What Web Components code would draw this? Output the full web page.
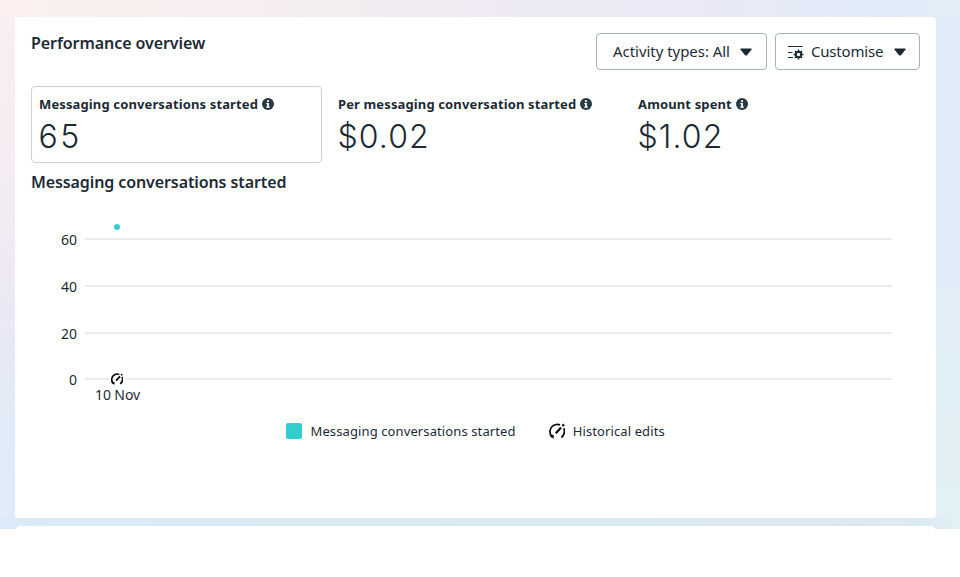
<!DOCTYPE html>
<html lang="en">
<head>
<meta charset="utf-8">
<title>Performance overview</title>
<style>
  body {
    margin: 0;
    height: 577px;
    overflow: hidden;
    background: #fff;
    color: #1c2b33;
    font-family: "Noto Sans", "Open Sans", sans-serif;
  }
</style>
</head>
<body>
<performance-page>
  <performance-card>
    <drop-button slot="actions" label="Activity types: All"></drop-button>
    <drop-button slot="actions" label="Customise" icon="settings"></drop-button>
    <metric-tile slot="metrics" label="Messaging conversations started" value="65" selected></metric-tile>
    <metric-tile slot="metrics" label="Per messaging conversation started" value="$0.02"></metric-tile>
    <metric-tile slot="metrics" label="Amount spent" value="$1.02"></metric-tile>
    <trend-chart></trend-chart>
    <chart-legend></chart-legend>
  </performance-card>
</performance-page>

<script>
class PerformancePage extends HTMLElement {
  connectedCallback() {
    this.attachShadow({ mode: "open" }).innerHTML = `
      <style>
        :host {
          display: block;
          box-sizing: border-box;
          height: 529px;
          padding: 17px 24px 0 15px;
          overflow: hidden;
          background:
            linear-gradient(90deg, #dbe9f8 0, #d9e9f2 30%, #dce8f2 93%, #dcebf5 97%, #e3f2f2 100%) 0 518px / 100% 11px no-repeat,
            linear-gradient(#e0ebf8 0, #e0edf8 50%, #e2f1f4 100%) 100% 17px / 24px 501px no-repeat,
            linear-gradient(#f9eff0 0, #f4ecf2 30%, #ebe8f5 58%, #e1ebf9 82%, #dfebf9 100%) 0 17px / 15px 501px no-repeat,
            linear-gradient(90deg, #fbf0ef 0, #f6eeef 25%, #efeaf3 50%, #e9e9f6 75%, #e1ebf8 92%, #e3eef8 100%);
        }
        .next {
          height: 8px;
          margin: 8px 1px 0;
          background: #fff;
          border-radius: 4px 4px 0 0;
        }
      </style>
      <slot></slot>
      <div class="next"></div>
    `;
  }
}

class PerformanceCard extends HTMLElement {
  connectedCallback() {
    this.attachShadow({ mode: "open" }).innerHTML = `
      <style>
        :host {
          display: block;
          box-sizing: border-box;
          height: 501px;
          padding: 16px;
          background: #fff;
          border-radius: 4px;
        }
        header {
          display: flex;
          justify-content: space-between;
          height: 53px;
        }
        h2, h3 {
          margin: 0;
          font-size: 16px;
          line-height: 22px;
          font-weight: 600;
        }
        h2 { line-height: 20px; letter-spacing: -0.07px; }
        h3 { margin: 8px 0 0; letter-spacing: -0.1px; }
        .actions {
          display: flex;
          align-items: flex-start;
          gap: 8px;
        }
        .metrics {
          display: grid;
          grid-template-columns: 291px 292px 1fr;
          column-gap: 8px;
        }
      </style>
      <header>
        <h2>Performance overview</h2>
        <div class="actions"><slot name="actions"></slot></div>
      </header>
      <div class="metrics"><slot name="metrics"></slot></div>
      <h3>Messaging conversations started</h3>
      <slot></slot>
    `;
  }
}

class DropButton extends HTMLElement {
  connectedCallback() {
    const settings = this.getAttribute("icon") === "settings";
    this.attachShadow({ mode: "open" }).innerHTML = `
      <style>
        :host { display: block; }
        button {
          display: flex;
          align-items: center;
          box-sizing: border-box;
          height: 37px;
          width: ${settings ? 145 : 171}px;
          padding: 0 0 0 ${settings ? 12 : 16}px;
          background: #fff;
          border: 1px solid #a5b3be;
          border-radius: 4px;
          font: 15px "Noto Sans", sans-serif;
          color: inherit;
          white-space: nowrap;
        }
        .icon { margin-right: 7px; }
        .caret { margin-left: ${settings ? 11 : 10}px; }
        span {
          padding-bottom: 2px;
          letter-spacing: ${settings ? -0.2 : -0.04}px;
        }
      </style>
      <button>
        ${settings ? `
          <svg class="icon" width="16" height="16" viewBox="0 0 16 16" fill="none" stroke="currentColor" stroke-width="1.2">
            <path d="M0 2.500H14.500M0 8.500h4.500M0 13.500h5"/>
            <circle cx="10.500" cy="10.500" r="2.700" stroke-width="2"/>
            <path d="M10.500 5.500v2M10.500 13.500v2M5.500 10.500h2M13.500 10.500h2M7 7l1.400 1.400M12.600 12.600l1.400 1.400M7 14l1.400-1.400M12.600 8.400L14 7" stroke-width="1.500"/>
          </svg>` : ""}
        <span>${this.getAttribute("label")}</span>
        <svg class="caret" width="12" height="8" viewBox="0 0 12 8">
          <path d="M1 .5h10q1 0 .6 1L7.2 7Q6 8 4.8 7L.4 1.500Q0 .5 1 .5z" fill="currentColor"/>
        </svg>
      </button>
    `;
  }
}

class MetricTile extends HTMLElement {
  connectedCallback() {
    this.attachShadow({ mode: "open" }).innerHTML = `
      <style>
        :host {
          display: block;
          box-sizing: border-box;
          height: 77px;
          padding: 8px 7px;
          border: 1px solid transparent;
          border-radius: 4px;
        }
        :host([selected]) { border-color: #cbd2d9; }
        .label {
          display: flex;
          align-items: center;
          gap: 4px;
          font-size: 13px;
          line-height: 18px;
          font-weight: 700;
          letter-spacing: 0.13px;
          white-space: nowrap;
        }
        .value {
          margin-top: 1px;
          font-family: Inter, "Noto Sans", sans-serif;
          font-size: 32px;
          line-height: 46px;
          font-weight: 300;
          letter-spacing: 1.1px;
          text-indent: -0.5px;
        }
        :host([selected]) .value { letter-spacing: 2.500px; }
      </style>
      <div class="label">
        ${this.getAttribute("label")}
        <svg width="12" height="12" viewBox="0 0 12 12">
          <circle cx="6" cy="6" r="6" fill="#283943"/>
          <path d="M5 2.200h2v1.700H5zM4.300 5H7v3.500h.8v1.200H4.300V8.500h.9V6.200h-.9z" fill="#fff"/>
        </svg>
      </div>
      <div class="value">${this.getAttribute("value")}</div>
    `;
  }
}

// gauge icon shared by the chart marker and the legend
const gauge = (size) => `
  <svg class="gauge" width="${size}" height="${size}" viewBox="0 0 16 16" fill="none" stroke="#0a0a0a" stroke-width="${size < 16 ? 2.200 : 1.700}">
    <path d="M3.200 14.200C-.6 10.500.6 3.200 6.200 1.700Q8.600 1 11 1.900"/>
    <path d="M0.800 12.600L4.400 15.400V12z" fill="#0a0a0a" stroke-width="0.500"/>
    <path d="M14.800 5.200C16 8.200 15.300 12 12.400 14.600"/>
    <path d="M6.800 10.200L12.100 4.500" stroke-width="2.300"/>
    <path d="M13.400 3l1.600-1.600" stroke-width="2.200"/>
  </svg>`;

class TrendChart extends HTMLElement {
  connectedCallback() {
    const rows = [60, 40, 20, 0];
    this.attachShadow({ mode: "open" }).innerHTML = `
      <style>
        :host {
          display: block;
          box-sizing: border-box;
          position: relative;
          height: 228px;
          padding-top: 23px;
          font-size: 14px;
        }
        .row {
          display: flex;
          align-items: center;
          height: 46.650px;
        }
        .tick {
          width: 46px;
          margin-right: 8px;
          line-height: 20px;
          text-align: right;
          transform: translateY(1px);
        }
        .line {
          width: 807px;
          height: 2px;
          background: #ebebeb;
        }
        /* data points sit over the grid */
        .dot {
          position: absolute;
          left: 83px;
          top: 31px;
          width: 6px;
          height: 6px;
          border-radius: 50%;
          background: #32cdcd;
        }
        .mark {
          position: absolute;
          left: 78px;
          top: 178px;
          width: 16px;
          height: 16px;
          background: #fff;
        }
        .gauge { display: block; margin: 2px; }
        .day {
          position: absolute;
          left: 64px;
          top: 192px;
          line-height: 20px;
          letter-spacing: -0.1px;
        }
      </style>
      ${rows.map((n) => `<div class="row"><span class="tick">${n}</span><div class="line"></div></div>`).join("")}
      <div class="dot"></div>
      <div class="mark">${gauge(12)}</div>
      <div class="day">10 Nov</div>
    `;
  }
}

class ChartLegend extends HTMLElement {
  connectedCallback() {
    this.attachShadow({ mode: "open" }).innerHTML = `
      <style>
        :host {
          display: flex;
          align-items: center;
          height: 20px;
          padding-left: 255px;
          font-size: 13px;
          white-space: nowrap;
        }
        .swatch {
          width: 16px;
          height: 16px;
          margin-right: 8.500px;
          border-radius: 2px;
          background: #32cdcd;
        }
        .gauge { margin: 0 8px 0 33px; }
        span { letter-spacing: 0.110px; }
      </style>
      <div class="swatch"></div>
      <span>Messaging conversations started</span>
      ${gauge(16)}
      <span>Historical edits</span>
    `;
  }
}

customElements.define("performance-page", PerformancePage);
customElements.define("performance-card", PerformanceCard);
customElements.define("drop-button", DropButton);
customElements.define("metric-tile", MetricTile);
customElements.define("trend-chart", TrendChart);
customElements.define("chart-legend", ChartLegend);
</script>
</body>
</html>
